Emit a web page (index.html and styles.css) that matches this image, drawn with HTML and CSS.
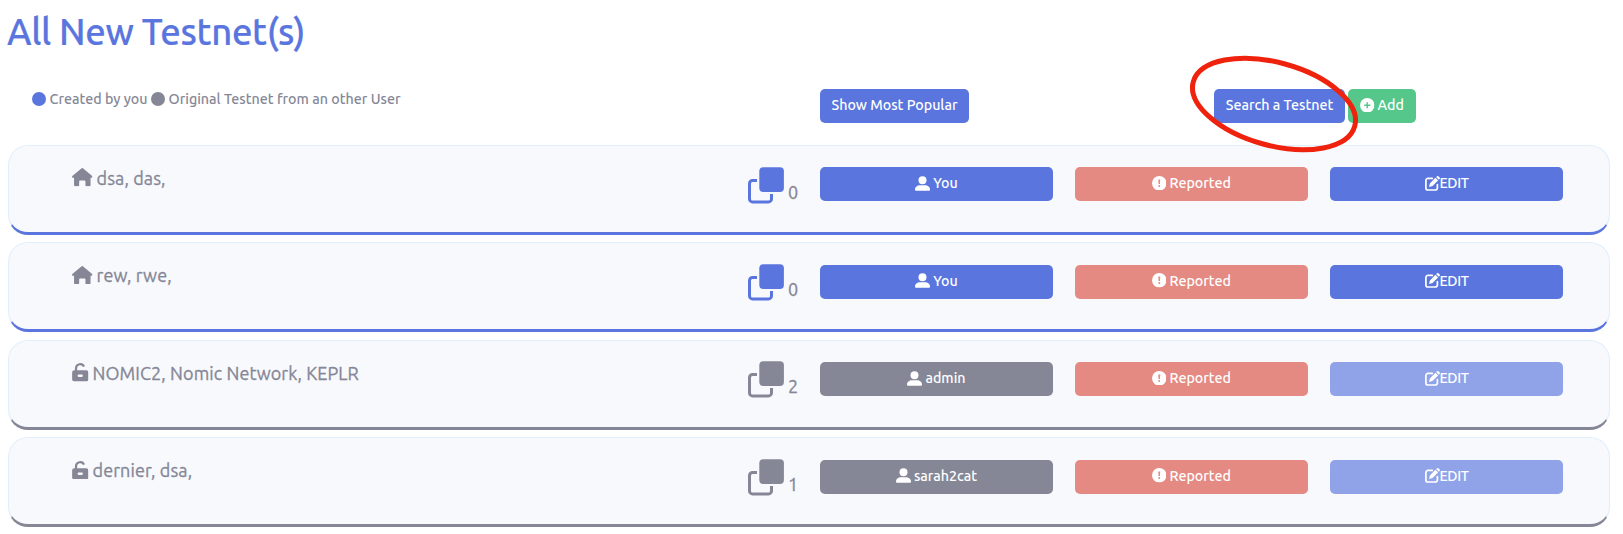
FILE: index.html
```
<!DOCTYPE html>
<html lang="en">
<head>
<meta charset="utf-8">
<title>All New Testnet(s)</title>
<link rel="stylesheet" href="styles.css">
</head>
<body>
<svg class="symbols" aria-hidden="true">
  <symbol id="home" viewBox="0 0 20 18"><path d="M9.1.4a1.3 1.3 0 0 1 1.8 0l8.5 7.2c1 .9.6 2-.5 2h-.8v6.9c0 .9-.5 1.4-1.4 1.4h-2.3c-.8 0-1.3-.5-1.3-1.3v-3.4c0-.7-.4-1.1-1-1.1H8c-.7 0-1 .4-1 1.1v3.4c0 .8-.5 1.3-1.3 1.3H3.4c-.9 0-1.4-.5-1.4-1.4V9.6h-.9c-1.1 0-1.5-1.1-.5-2z"/></symbol>
  <symbol id="unlock" viewBox="0 0 16 18"><path fill-rule="evenodd" d="M2.8 7V5.2A5.1 5.1 0 0 1 12.6 3.2l-2 .8a2.9 2.9 0 0 0-5.6 1.2V7h8.700a2.200 2.200 0 0 1 2.200 2.200v6.500a2.200 2.200 0 0 1-2.200 2.200H2.300A2.200 2.200 0 0 1 .1 15.700V9.200A2.200 2.200 0 0 1 2.300 7zM6.500 11.300a1.100 1.100 0 0 0 0 2.200h3a1.100 1.100 0 0 0 0-2.200z"/></symbol>
  <symbol id="copy" viewBox="0 0 36 37"><rect x="11.300" y=".3" width="24.600" height="24.700" rx="4"/><path d="M9 13.400H4.500a3 3 0 0 0-3 3v15.500a3 3 0 0 0 3 3h16a3 3 0 0 0 3-3V27" fill="none" stroke="currentColor" stroke-width="3"/></symbol>
  <symbol id="user" viewBox="0 0 15 15"><circle cx="7.500" cy="4.200" r="4"/><path d="M0 13.700C0 10.700 2.300 9.200 5 9.200h5c2.700 0 5 1.500 5 4.500q0 1-1 1H1q-1 0-1-1z"/></symbol>
  <symbol id="alert" viewBox="0 0 14 14"><path fill-rule="evenodd" d="M7 0a7 7 0 1 1 0 14A7 7 0 0 1 7 0zM6.100 3.300l.2 4.400h1.400l.2-4.400zM7 8.800a.95.95 0 1 0 0 1.900.95.95 0 0 0 0-1.900z"/></symbol>
  <symbol id="plus" viewBox="0 0 14 14"><path fill-rule="evenodd" d="M7 0a7 7 0 1 1 0 14A7 7 0 0 1 7 0zM6.300 4v2.300H4v1.400h2.300V10h1.400V7.700H10V6.300H7.700V4z"/></symbol>
  <symbol id="edit" viewBox="0 0 15 15"><path d="M7.300 2.400H3A2.100 2.100 0 0 0 .9 4.500v7.400A2.100 2.100 0 0 0 3 14h7.300a2.100 2.100 0 0 0 2.100-2.100V8.500" fill="none" stroke="currentColor" stroke-width="1.700" stroke-linecap="round"/><path d="M10.400 1.800l2.700 2.700-5.600 5.600-3.500 1 .9-3.700zM11.100 1.100l.7-.7a1.300 1.300 0 0 1 1.800 0l.9.9a1.300 1.300 0 0 1 0 1.800l-.7.7z"/></symbol>
</svg>

<h1 class="title">All New Testnet(s)</h1>

<div class="toolbar">
  <div class="legend">
    <i class="dot mine"></i><span class="mine-label">Created by you</span>
    <i class="dot other"></i><span>Original Testnet from an other User</span>
  </div>
  <div><button class="btn blue popular">Show Most Popular</button></div>
  <div class="actions">
    <button class="btn blue search">Search a Testnet</button>
    <button class="btn green add"><svg class="ic"><use href="#plus"/></svg><span>Add</span></button>
    <svg class="highlight" viewBox="0 0 180 110"><ellipse cx="90" cy="55" rx="83.700" ry="41.500" transform="rotate(15.300 90 55)"/></svg>
  </div>
</div>

<main class="list">
  <section class="card own">
    <div class="name"><svg class="home"><use href="#home"/></svg><span>dsa, das,</span></div>
    <div class="copies"><svg><use href="#copy"/></svg><span>0</span></div>
    <button class="btn blue"><svg class="person"><use href="#user"/></svg><span>You</span></button>
    <button class="btn red"><svg class="ic"><use href="#alert"/></svg><span>Reported</span></button>
    <button class="btn blue edit"><svg class="pen"><use href="#edit"/></svg><span>EDIT</span></button>
  </section>
  <section class="card own">
    <div class="name"><svg class="home"><use href="#home"/></svg><span>rew, rwe,</span></div>
    <div class="copies"><svg><use href="#copy"/></svg><span>0</span></div>
    <button class="btn blue"><svg class="person"><use href="#user"/></svg><span>You</span></button>
    <button class="btn red"><svg class="ic"><use href="#alert"/></svg><span>Reported</span></button>
    <button class="btn blue edit"><svg class="pen"><use href="#edit"/></svg><span>EDIT</span></button>
  </section>
  <section class="card">
    <div class="name"><svg class="lock"><use href="#unlock"/></svg><span>NOMIC2, Nomic Network, KEPLR</span></div>
    <div class="copies"><svg><use href="#copy"/></svg><span>2</span></div>
    <button class="btn gray"><svg class="person"><use href="#user"/></svg><span>admin</span></button>
    <button class="btn red"><svg class="ic"><use href="#alert"/></svg><span>Reported</span></button>
    <button class="btn pale edit"><svg class="pen"><use href="#edit"/></svg><span>EDIT</span></button>
  </section>
  <section class="card">
    <div class="name"><svg class="lock"><use href="#unlock"/></svg><span>dernier, dsa,</span></div>
    <div class="copies"><svg><use href="#copy"/></svg><span>1</span></div>
    <button class="btn gray"><svg class="person"><use href="#user"/></svg><span>sarah2cat</span></button>
    <button class="btn red"><svg class="ic"><use href="#alert"/></svg><span>Reported</span></button>
    <button class="btn pale edit"><svg class="pen"><use href="#edit"/></svg><span>EDIT</span></button>
  </section>
</main>
</body>
</html>
```
FILE: styles.css
```
* { box-sizing: border-box; }
body {
  margin: 0;
  height: 534px;
  overflow: hidden;
  background: #fff;
  color: #858796;
  font-family: Ubuntu, "Noto Sans", sans-serif;
}
svg { fill: currentColor; flex: none; }
.symbols { display: none; }
.title {
  margin: 0;
  padding: 7px 0 0 7px;
  height: 89px;
  color: #5a76de;
  font-size: 36.5px;
  font-weight: 500;
  line-height: 50px;
  letter-spacing: -0.35px;
  -webkit-text-stroke: 0.2px #5a76de;
  white-space: nowrap;
}
.toolbar {
  display: grid;
  grid-template-columns: 788px 394px 1fr;
  height: 56px;
  padding-left: 32px;
  align-items: start;
}
.legend { display: flex; align-items: center; height: 20px; font-size: 14.25px; font-weight: 500; white-space: nowrap; }
.dot { width: 14px; height: 14px; border-radius: 50%; flex: none; margin-right: 3.5px; }
.dot.mine { background: #5a76de; }
.dot.other { background: #858796; }
.mine-label { width: 101.5px; }
.actions { position: relative; display: flex; gap: 3px; }
.btn {
  display: flex;
  align-items: center;
  justify-content: center;
  gap: 3px;
  width: 100%;
  height: 34px;
  padding: 0 0 2.4px;
  border: 0;
  border-radius: 5px;
  color: #fff;
  font: 500 14.25px/20px Ubuntu, "Noto Sans", sans-serif;
  white-space: nowrap;
}
.blue { background: #5a76de; }
.gray { background: #858796; }
.red { background: #e48a82; }
.pale { background: #90a3e9; }
.green { background: #55c78b; }
.popular { width: 149px; }
.search { width: 131px; }
.add { width: 68px; }
.ic { width: 14.5px; height: 14.5px; }
.person { width: 15px; height: 15px; }
.pen { width: 15px; height: 15px; }
.edit { gap: 0; letter-spacing: -0.4px; }
.highlight {
  position: absolute;
  left: -30.5px;
  top: -40px;
  width: 180px;
  height: 110px;
  fill: none;
  stroke: #ef220d;
  stroke-width: 5;
}
.list { display: grid; gap: 7.45px; padding: 0 13px 0 8px; }
.card {
  display: grid;
  grid-template-columns: 654px 50px 233px 233px 233px;
  column-gap: 22px;
  align-items: start;
  height: 90px;
  padding: 21.45px 0 0 63px;
  background: #f8f9fd;
  border: 1px solid #e1effd;
  border-bottom: 3px solid #858796;
  border-radius: 20px;
}
.card.own { border-bottom-color: #5a76de; }
.name {
  display: flex;
  align-items: center;
  gap: 4px;
  height: 20.4px;
  font-size: 18px;
  letter-spacing: 0.1px;
  -webkit-text-stroke: 0.3px #858796;
  white-space: nowrap;
}
.home { width: 20.5px; height: 18.5px; }
.lock { width: 16.5px; height: 18.5px; }
.copies {
  display: flex;
  gap: 4px;
  height: 36px;
  margin-top: -0.9px;
  font-size: 18px;
  line-height: 51px;
  -webkit-text-stroke: 0.3px #858796;
}
.copies svg { width: 36px; height: 37px; color: #858796; }
.own .copies svg { color: #5a76de; }
```
